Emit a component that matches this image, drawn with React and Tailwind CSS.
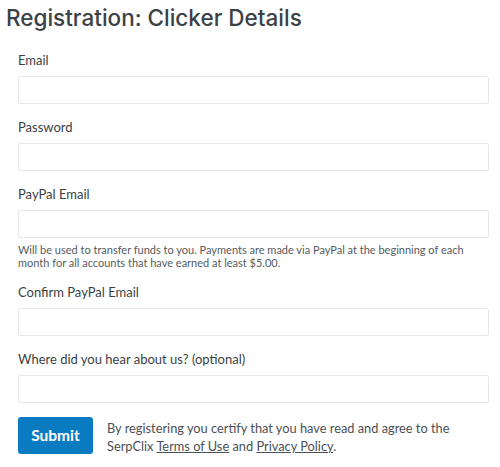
import React from "react";

const FIELDS = [
  { id: "email", label: "Email" },
  { id: "password", label: "Password", type: "password" },
  {
    id: "paypal",
    label: "PayPal Email",
    help: "Will be used to transfer funds to you. Payments are made via PayPal at the beginning of each month for all accounts that have earned at least $5.00.",
  },
  { id: "paypal2", label: "Confirm PayPal Email" },
  { id: "source", label: "Where did you hear about us? (optional)" },
];

function Field({ label, type = "text", help }) {
  return (
    <div className="mb-[13px]">
      <label className="block h-[26px] pt-[1px] text-[13px] leading-[18px] text-[#3a3f44]">{label}</label>
      <input
        type={type}
        className="block h-[28px] w-full rounded-[2px] border border-[#e6e7e9] bg-white px-2 text-[13px] outline-none"
      />
      {help && (
        <p className="mb-[1px] mt-[5px] text-[11px] leading-[13px] text-[#555b60]">{help}</p>
      )}
    </div>
  );
}

export default function App() {
  return (
    <div className="h-[467px] w-[500px] overflow-hidden bg-white font-['Lato',sans-serif]">
      <h1 className="px-[6px] pt-[4px] font-['Inter',sans-serif] text-[22.5px] font-medium leading-[28px] text-[#3c4146]">
        Registration: Clicker Details
      </h1>
      <form className="pl-[18px] pr-[11px] pt-[18px]">
        {FIELDS.map((f) => (
          <Field key={f.id} {...f} />
        ))}
        <div className="flex items-start gap-[14px] pt-[1px]">
          <button
            type="button"
            className="h-[37px] w-[75px] shrink-0 rounded-[3px] bg-[#0a7bc1] text-[15.5px] font-bold text-white"
          >
            Submit
          </button>
          <p className="pt-[2px] text-[12.8px] leading-[18px] text-[#4a5055]">
            By registering you certify that you have read and agree to the SerpClix{" "}
            <a className="underline">Terms of Use</a> and <a className="underline">Privacy Policy</a>.
          </p>
        </div>
      </form>
    </div>
  );
}
